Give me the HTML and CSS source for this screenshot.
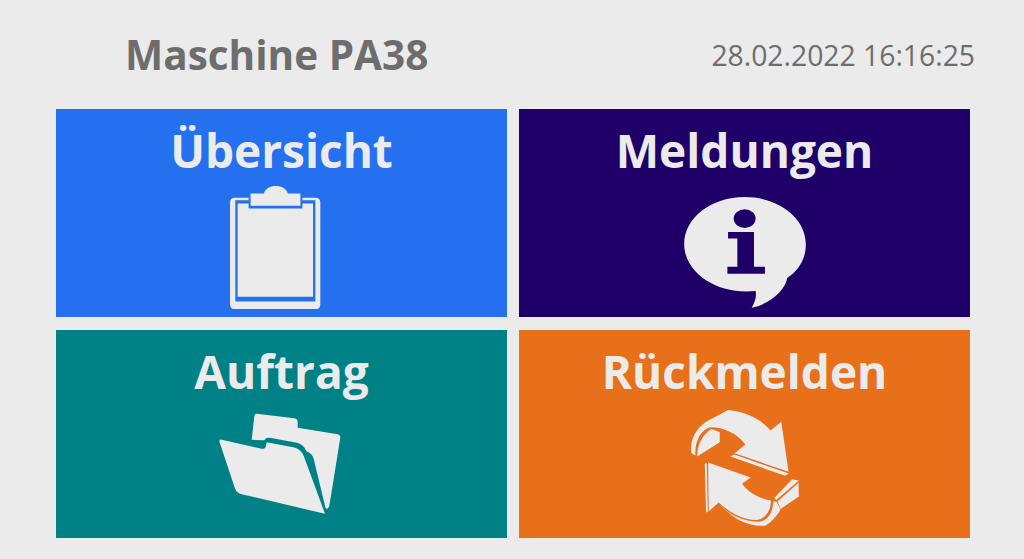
FILE: index.html
```html
<!DOCTYPE html>
<html lang="en">
<head>
    <meta charset="UTF-8">
    <title>Maschine PA38</title>
    <link rel="stylesheet" href="styles.css">
</head>
<body>
    <div class="header">
        <h1>Maschine PA38</h1>
        <div class="clock">28.02.2022 16:16:25</div>
    </div>
    <div class="tiles">
        <div class="tile blue">
            <h2>Übersicht</h2>
            <svg class="icon icon-clip" viewBox="85 48 280 372">
                <path d="M103 83H144V90H104V395H345V90H306V83H345Q360 83 360 98V403Q360 418 345 418H103Q88 418 88 403V98Q88 83 103 83Z"/>
                <path d="M111 100H144V115H306V100H338V381H111Z"/>
                <path d="M150 70H190C198 40 254 40 262 70H300V107H150Z"/>
            </svg>
        </div>
        <div class="tile navy">
            <h2>Meldungen</h2>
            <svg class="icon icon-info" viewBox="40 50 366 334">
                <path fill-rule="evenodd" d="M222 50C324 50 406 113 406 192C406 240 382 272 350 294C344 330 300 372 243 383C254 365 258 350 255 333C130 345 40 272 40 192C40 113 121 50 222 50ZM222 87A33 28 0 1 0 222 143A33 28 0 1 0 222 87ZM172 155V175H200V260H170V281H283V260H250V155Z"/>
            </svg>
        </div>
        <div class="tile teal">
            <h2>Auftrag</h2>
            <svg class="icon icon-folder" viewBox="42 28 366 302">
                <path d="M155 30L268 43Q278 45 278 54V72L398 91Q407 93 406 101L373 306Q370 318 362 314L326 165Q322 148 304 142Q296 122 276 117L195 102Q182 100 178 109L140 108L148 37Q149 29 155 30Z"/>
                <path d="M47 107L170 135Q182 136 183 125L185 115L268 131Q288 136 296 156L360 330L110 271Q95 268 90 254L43 113Q43 106 47 107Z"/>
            </svg>
        </div>
        <div class="tile orange">
            <h2>Rückmelden</h2>
            <svg class="icon icon-arrows" viewBox="44 0 330 352">
                <path d="M48 130C42 95 58 58 92 35L158 0C215 5 260 30 286 62L318 35L340 186L178 130L210 104C185 70 145 52 105 52C75 60 57 95 60 137Z"/>
                <path d="M65 140C65 105 80 75 107 57L133 66V97Z"/>
                <path d="M165 140L177 134L340 191L330 198Z"/>
                <path d="M98 158L226 203L200 222C222 252 258 268 287 272C287 302 272 327 245 331C200 332 160 305 130 278L100 305Z"/>
                <path d="M133 283C165 318 205 336 250 336C278 333 293 310 294 274L304 276L316 300C300 325 285 340 270 348C215 352 170 325 133 283Z"/>
                <path d="M88 162L94 160L97 306L92 308Z"/>
                <path d="M297 265L351 208L371 212L303 271Z"/>
                <path d="M307 275L370 219L371 260L316 298Z"/>
            </svg>
        </div>
    </div>
</body>
</html>
```
FILE: styles.css
```css
body {
    margin: 0;
    height: 559px;
    overflow: hidden;
    background-color: #ebebeb;
    font-family: "Open Sans", sans-serif;
}
.header {
    display: flex;
    justify-content: space-between;
    align-items: center;
    height: 109px;
    padding: 0 49px 0 125px;
    color: #6d6d6d;
}
h1 {
    margin: 0;
    font-size: 40.5px;
    font-weight: 700;
}
.clock {
    font-size: 28.3px;
}
.tiles {
    display: grid;
    grid-template-columns: 451px 451px;
    grid-template-rows: 208px 208px;
    column-gap: 12px;
    row-gap: 13px;
    padding-left: 56px;
}
.tile {
    display: flex;
    flex-direction: column;
    align-items: center;
    color: #ebebeb;
}
.tile h2 {
    margin: 10px 0 0;
    height: 67px;
    line-height: 63px;
    font-size: 46px;
    font-weight: 700;
}
.icon {
    fill: #ebebeb;
}
.blue { background-color: #2470ee; }
.navy { background-color: #1f0068; }
.teal { background-color: #008186; }
.orange { background-color: #e8701a; }
.icon-clip {
    width: 93px;
    height: 124px;
    margin-right: 13px;
}
.icon-info {
    width: 122px;
    height: 111px;
    margin-top: 11px;
}
.icon-folder {
    width: 122px;
    height: 101px;
    margin-top: 6px;
    margin-right: 3px;
}
.icon-arrows {
    width: 110px;
    height: 117px;
    margin-top: 3px;
}
```
